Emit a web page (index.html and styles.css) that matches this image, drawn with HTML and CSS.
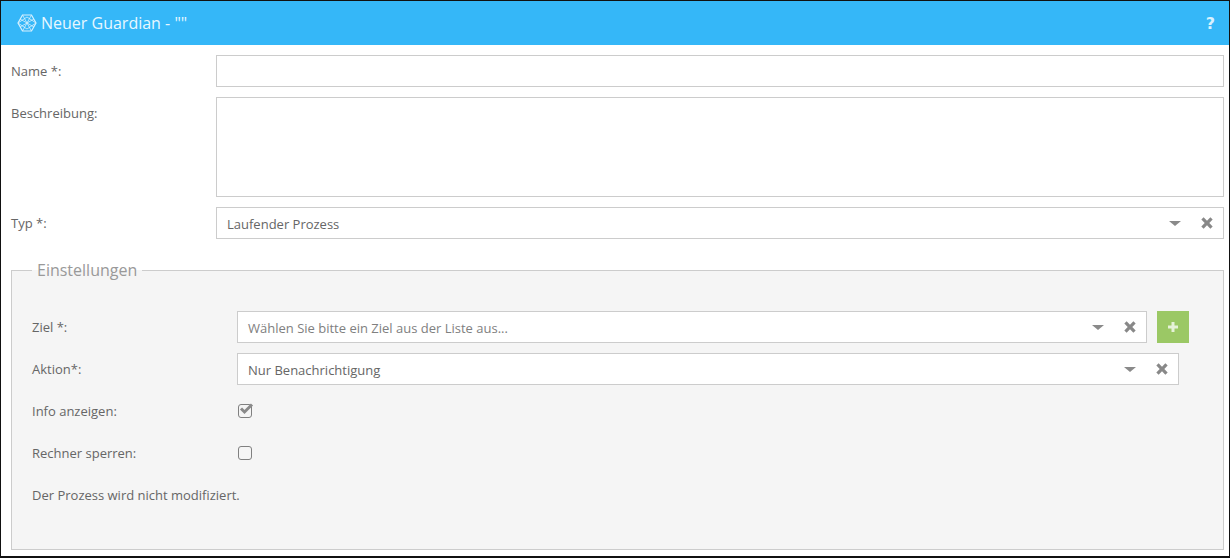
FILE: index.html
```html
<!DOCTYPE html>
<html lang="de">
<head>
    <meta charset="UTF-8">
    <title>Neuer Guardian</title>
    <link rel="stylesheet" href="styles.css">
</head>
<body>
    <div class="window">
        <div class="title-bar">
            <div class="title">
                <svg class="logo" width="20" height="18" viewBox="0 0 20 18" fill="none" stroke="#d6f0fe" stroke-width="1.2">
                    <path d="M5.5 1 H14.5 L19 9 L14.5 17 H5.5 L1 9 Z"/>
                    <path d="M5.5 1 L14.5 17 M14.5 1 L5.5 17 M1 9 L10 3 L19 9 L10 15 Z M3 5 L17 13 M17 5 L3 13" stroke-width="0.8"/>
                </svg>
                <span>Neuer Guardian - ""</span>
            </div>
            <span class="help">?</span>
        </div>

        <form class="form">
            <div class="row">
                <label class="row-label">Name *:</label>
                <input type="text" class="text-input">
            </div>
            <div class="row">
                <label class="row-label">Beschreibung:</label>
                <textarea class="text-area"></textarea>
            </div>
            <div class="row">
                <label class="row-label">Typ *:</label>
                <div class="select">
                    <span class="select-value">Laufender Prozess</span>
                    <span class="caret"></span>
                    <svg class="clear" width="12" height="12" viewBox="0 0 11 11"><path d="M2.4 0.3 L5.5 3.4 L8.6 0.3 L10.7 2.4 L7.6 5.5 L10.7 8.6 L8.6 10.7 L5.5 7.6 L2.4 10.7 L0.3 8.6 L3.4 5.5 L0.3 2.4 Z"/></svg>
                </div>
            </div>

            <fieldset class="settings">
                <legend>Einstellungen</legend>
                <div class="row">
                    <label class="row-label">Ziel *:</label>
                    <div class="select">
                        <span class="select-value placeholder">Wählen Sie bitte ein Ziel aus der Liste aus...</span>
                        <span class="caret"></span>
                        <svg class="clear" width="12" height="12" viewBox="0 0 11 11"><path d="M2.4 0.3 L5.5 3.4 L8.6 0.3 L10.7 2.4 L7.6 5.5 L10.7 8.6 L8.6 10.7 L5.5 7.6 L2.4 10.7 L0.3 8.6 L3.4 5.5 L0.3 2.4 Z"/></svg>
                    </div>
                    <button type="button" class="add-button">
                        <svg width="10" height="10" viewBox="0 0 10 10"><path d="M3.5 0 H6.5 V3.5 H10 V6.5 H6.5 V10 H3.5 V6.5 H0 V3.5 H3.5 Z" fill="#e6f2d8"/></svg>
                    </button>
                </div>
                <div class="row row-short">
                    <label class="row-label">Aktion*:</label>
                    <div class="select">
                        <span class="select-value">Nur Benachrichtigung</span>
                        <span class="caret"></span>
                        <svg class="clear" width="12" height="12" viewBox="0 0 11 11"><path d="M2.4 0.3 L5.5 3.4 L8.6 0.3 L10.7 2.4 L7.6 5.5 L10.7 8.6 L8.6 10.7 L5.5 7.6 L2.4 10.7 L0.3 8.6 L3.4 5.5 L0.3 2.4 Z"/></svg>
                    </div>
                </div>
                <div class="row check-row">
                    <label class="row-label">Info anzeigen:</label>
                    <span class="checkbox">
                        <svg width="16" height="14" viewBox="0 0 16 14"><path d="M3 5.5 L6.5 9 L14 1.5" fill="none" stroke="#8a8a8a" stroke-width="3"/></svg>
                    </span>
                </div>
                <div class="row check-row">
                    <label class="row-label">Rechner sperren:</label>
                    <span class="checkbox"></span>
                </div>
                <p class="hint">Der Prozess wird nicht modifiziert.</p>
            </fieldset>
        </form>
    </div>
</body>
</html>
```

FILE: styles.css
```css
* {
    box-sizing: border-box;
}
body {
    margin: 0;
    font-family: "Open Sans", sans-serif;
    font-size: 13px;
    color: #666;
    background: #fff;
}
.window {
    height: 558px;
    border: 1px solid #111;
    border-bottom-width: 2px;
    background: #fff;
    overflow: hidden;
}
.title-bar {
    height: 44px;
    background: #35b7f8;
    color: #e8f7ff;
    display: flex;
    align-items: center;
    justify-content: space-between;
    padding: 0 14px 0 16px;
}
.title {
    display: flex;
    align-items: center;
    gap: 4px;
    font-size: 16px;
}
.logo {
    display: block;
}
.help {
    font-family: "DejaVu Sans", sans-serif;
    font-weight: bold;
    font-size: 16px;
    color: #d9f1fe;
}
.form {
    padding: 10px 5px 0 10px;
}
.row {
    display: flex;
    margin-bottom: 10px;
}
.row-label {
    flex: 0 0 205px;
    line-height: 32px;
    height: 32px;
}
.text-input,
.text-area,
.select {
    flex: 1;
    min-width: 0;
    height: 32px;
    border: 1px solid #ccc;
    background: #fff;
    outline: none;
    margin: 0;
    display: block;
}
.text-area {
    height: 100px;
    resize: none;
}
.select {
    display: flex;
    align-items: center;
    padding: 0 10px;
}
.select-value {
    flex: 1;
    padding-top: 1px;
    color: #666;
}
.placeholder {
    color: #808080;
}
.caret {
    width: 0;
    height: 0;
    border-left: 6px solid transparent;
    border-right: 6px solid transparent;
    border-top: 5px solid #8a8a8a;
    margin-right: 20px;
}
.clear {
    fill: #888;
}
.settings {
    margin: 21px 0 0 0;
    padding: 31px 34px 0 20px;
    height: 290px;
    border: 1px solid #ccc;
    background: #f5f5f5;
    min-width: 0;
}
.settings legend {
    margin: 0;
    padding: 0 5px;
    font-size: 16px;
    line-height: 20px;
    color: #999;
}
.row-short {
    margin-right: 10px;
}
.add-button {
    flex: 0 0 32px;
    height: 32px;
    margin: 0 0 0 10px;
    padding: 0;
    border: none;
    background: #9bc865;
    display: flex;
    align-items: center;
    justify-content: center;
}
.check-row {
    align-items: center;
}
.checkbox {
    width: 14px;
    height: 14px;
    margin-left: 1px;
    border: 1.5px solid #808080;
    border-radius: 3px;
    display: block;
    position: relative;
}
.checkbox svg {
    position: absolute;
    left: -1px;
    top: -2px;
}
.hint {
    margin: 0;
    line-height: 32px;
}
```
